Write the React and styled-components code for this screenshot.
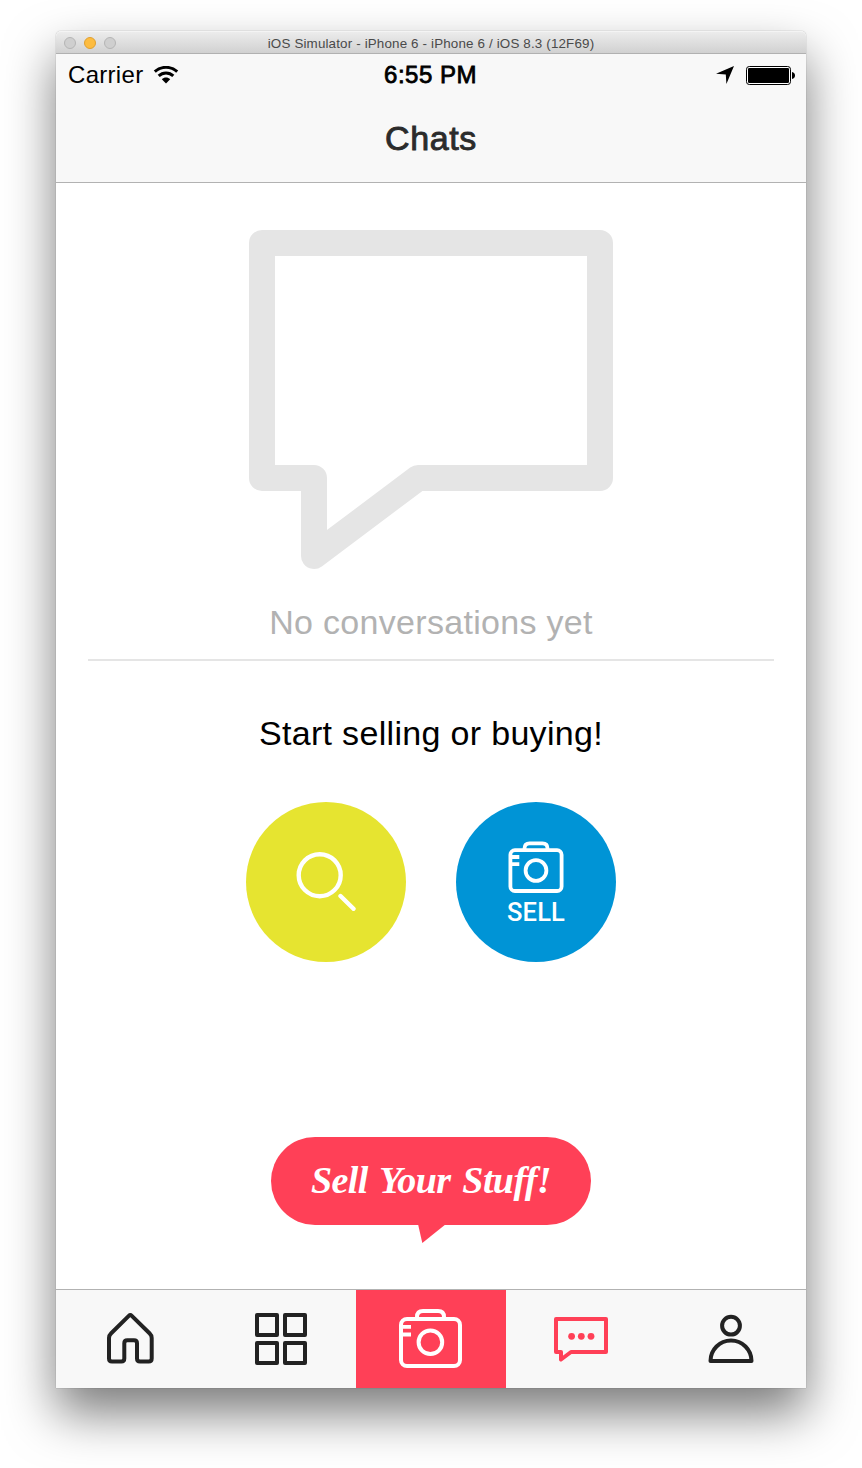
import React from "react";
import styled, { createGlobalStyle } from "styled-components";

const Global = createGlobalStyle`
  * { box-sizing: border-box; }
  body { margin: 0; background: #fff; font-family: "Liberation Sans", Arial, sans-serif; }
  svg { display: block; }
`;

const Desktop = styled.div`
  width: 862px;
  height: 1468px;
  padding: 31px 56px 80px;
  overflow: hidden;
`;

const Window = styled.div`
  width: 750px;
  height: 1357px;
  display: flex;
  flex-direction: column;
  background: #fff;
  border-radius: 5px 5px 0 0;
  box-shadow: 0 0 1px rgba(0, 0, 0, 0.55), 0 25px 50px rgba(0, 0, 0, 0.52);
`;

const TitleBar = styled.header`
  height: 23px;
  display: grid;
  grid-template-columns: 1fr auto 1fr;
  align-items: center;
  padding: 2px 8px 0;
  border-radius: 5px 5px 0 0;
  border-bottom: 1px solid #b1b1b1;
  background: linear-gradient(#ededed, #d1d1d1);
  box-shadow: inset 0 1px 0 #f4f4f4;
`;

const Lights = styled.div`
  display: flex;
  gap: 8px;
`;

const Light = styled.span`
  width: 12px;
  height: 12px;
  border-radius: 50%;
  background: ${(p) => (p.$on ? "#fdbc40" : "#cfcfcf")};
  border: 1px solid ${(p) => (p.$on ? "#e0a030" : "#b5b5b5")};
`;

const WindowTitle = styled.span`
  padding-top: 1px;
  font-size: 13.4px;
  line-height: 18px;
  color: #4a4a4a;
  letter-spacing: 0.15px;
  white-space: nowrap;
`;

const TopArea = styled.div`
  height: 129px;
  background: #f8f8f8;
  border-bottom: 1px solid #b2b2b2;
`;

const StatusBar = styled.div`
  height: 40px;
  display: grid;
  grid-template-columns: 1fr auto 1fr;
  align-items: center;
  padding: 2px 11px 0 12px;
  font-size: 24px;
  color: #000;
`;

const StatusSide = styled.div`
  display: flex;
  align-items: center;
  gap: ${(p) => p.$gap}px;
  justify-content: ${(p) => (p.$end ? "flex-end" : "flex-start")};
`;

const Carrier = styled.span`
  letter-spacing: 0.3px;
`;

const Clock = styled.span`
  letter-spacing: 0.5px;
  margin-right: 2px;
  -webkit-text-stroke: 0.8px #000;
`;

const NavTitle = styled.h1`
  margin: 0;
  height: 88px;
  line-height: 88px;
  text-align: center;
  font-size: 34px;
  font-weight: 400;
  letter-spacing: 0.6px;
  color: #2b2b2b;
  -webkit-text-stroke: 0.9px #2b2b2b;
`;

const Content = styled.main`
  flex: 1;
  display: flex;
  flex-direction: column;
  align-items: center;
  padding: 47px 32px 0;
`;

const EmptyLabel = styled.p`
  margin: 31px 0 0;
  width: 686px;
  height: 60px;
  line-height: 42px;
  text-align: center;
  font-size: 34px;
  letter-spacing: 0.3px;
  color: #b2b2b2;
  border-bottom: 2px solid #e5e5e5;
`;

const Prompt = styled.p`
  margin: 51px 0 0;
  height: 42px;
  line-height: 42px;
  font-size: 34px;
  letter-spacing: 0.32px;
  color: #000;
`;

const Actions = styled.div`
  display: flex;
  gap: 50px;
  margin-top: 48px;
`;

const RoundButton = styled.button`
  width: 160px;
  height: 160px;
  padding: ${(p) => p.$pad || "0"};
  border: 0;
  border-radius: 50%;
  display: flex;
  flex-direction: column;
  align-items: center;
  justify-content: center;
  color: #fff;
  background: ${(p) => p.$color};
`;

const SellLabel = styled.span`
  height: 30px;
  font: 500 25.5px/30px Roboto, sans-serif;
  letter-spacing: 0.2px;
  margin-top: 4px;
`;

const Callout = styled.div`
  display: flex;
  flex-direction: column;
  margin-top: 175px;
`;

const CalloutBody = styled.div`
  width: 320px;
  height: 88px;
  border-radius: 44px;
  background: #ff4057;
  color: #fff;
  text-align: center;
  font: italic 700 38px/86px "Liberation Serif", serif;
  letter-spacing: -0.6px;
  word-spacing: 3px;
  white-space: nowrap;
`;

const CalloutTail = styled.svg`
  margin: -1px 0 0 147px;
`;

const TabBar = styled.nav`
  height: 99px;
  display: grid;
  grid-template-columns: repeat(5, 150px);
  border-top: 1px solid #b2b2b2;
  background: #f8f8f8;
`;

const Tab = styled.div`
  display: flex;
  align-items: center;
  justify-content: center;
  color: ${(p) => p.$color || "#222"};
  background: ${(p) => p.$fill || "transparent"};
`;

const TabIcon = ({ children }) => (
  <svg width="64" height="64" viewBox="0 0 64 64" fill="none" stroke="currentColor"
    strokeWidth="4" strokeLinejoin="round" strokeLinecap="round">
    {children}
  </svg>
);

const WifiIcon = () => (
  <svg width="26" height="18" viewBox="0 0 26 18" fill="none" stroke="#000" strokeWidth="3">
    <path d="M1.8 5.6C8 -.1 18 -.1 24.2 5.6" />
    <path d="M5.7 9.9C9.8 6 16.2 6 20.3 9.9" />
    <path d="M8.8 13.2C11.3 10.8 14.7 10.8 17.2 13.2L13 17.4Z" fill="#000" stroke="none" />
  </svg>
);

const LocationIcon = () => (
  <svg width="18" height="18" viewBox="0 0 18 18">
    <path d="M18 0L10.4 18L9.8 8.4L0 7.7Z" />
  </svg>
);

const BatteryIcon = () => (
  <svg width="49" height="19" viewBox="0 0 49 19">
    <rect x="0.5" y="0.5" width="44" height="18" rx="2.8" fill="#fff" stroke="#000" />
    <rect x="2" y="2" width="41" height="15" rx="1.2" />
    <path d="M46 6q3 .6 3 3.5t-3 3.5z" />
  </svg>
);

const BigBubble = () => (
  <svg width="364" height="340" viewBox="0 0 364 340" fill="none" stroke="#e5e5e5"
    strokeWidth="26" strokeLinejoin="round">
    <path d="M13 13H351V248H169L65 326V248H13Z" />
  </svg>
);

const SearchIcon = () => (
  <svg width="60" height="60" viewBox="0 0 60 60" fill="none" stroke="currentColor" strokeLinecap="round">
    <circle cx="23.7" cy="24.2" r="21" strokeWidth="4.4" />
    <path d="M44.5 45L57.5 57.8" strokeWidth="4.4" />
  </svg>
);

const SellCamera = () => (
  <svg width="56" height="52" viewBox="0 0 56 52" fill="none" stroke="currentColor" strokeWidth="3.8">
    <rect x="2.4" y="9.2" width="51.2" height="40.8" rx="4.5" />
    <path d="M16.5 9V7.5Q16.5 2.4 21.5 2.4H34.5Q39.5 2.4 39.5 7.5V9" />
    <circle cx="28" cy="29.5" r="10.4" />
    <path d="M4 16H11.3M4 23.2H11.3" />
  </svg>
);

export default function App() {
  return (
    <>
      <Global />
      <Desktop>
        <Window>
          <TitleBar>
            <Lights><Light /><Light $on /><Light /></Lights>
            <WindowTitle>iOS Simulator - iPhone 6 - iPhone 6 / iOS 8.3 (12F69)</WindowTitle>
            <span />
          </TitleBar>
          <TopArea>
            <StatusBar>
              <StatusSide $gap={10}><Carrier>Carrier</Carrier><WifiIcon /></StatusSide>
              <Clock>6:55 PM</Clock>
              <StatusSide $end $gap={12}><LocationIcon /><BatteryIcon /></StatusSide>
            </StatusBar>
            <NavTitle>Chats</NavTitle>
          </TopArea>
          <Content>
            <BigBubble />
            <EmptyLabel>No conversations yet</EmptyLabel>
            <Prompt>Start selling or buying!</Prompt>
            <Actions>
              <RoundButton $color="#e6e430" $pad="0 0 3px" aria-label="Search"><SearchIcon /></RoundButton>
              <RoundButton $color="#0094d6" $pad="4px 0 0"><SellCamera /><SellLabel>SELL</SellLabel></RoundButton>
            </Actions>
            <Callout>
              <CalloutBody>Sell Your Stuff!</CalloutBody>
              <CalloutTail width="28" height="19" viewBox="0 0 28 19">
                <path d="M0 0H28L4.3 19Z" fill="#ff4057" />
              </CalloutTail>
            </Callout>
          </Content>
          <TabBar>
            <Tab>
              <TabIcon>
                <path d="M29.8 8.9Q31.3 7.4 32.8 8.9L50.5 26.2Q52.7 28.3 52.7 31V51.5Q52.7 54.5 49.7 54.5H41Q38 54.5 38 51.5V36.3Q38 33.3 35 33.3H28.3Q25.3 33.3 25.3 36.3V51.5Q25.3 54.5 22.3 54.5H13Q10 54.5 10 51.5V31Q10 28.3 12.2 26.2Z" />
              </TabIcon>
            </Tab>
            <Tab>
              <TabIcon>
                <path d="M8 8H28V28H8ZM36 8H56V28H36ZM8 36H28V56H8ZM36 36H56V56H36Z" />
              </TabIcon>
            </Tab>
            <Tab $fill="#ff4057" $color="#fff">
              <TabIcon>
                <rect x="2" y="12" width="59" height="47" rx="6" />
                <path d="M18 11.5V10Q18 4 24 4H39Q45 4 45 10V11.5" strokeLinecap="butt" />
                <circle cx="31.4" cy="35.3" r="11.8" />
                <path d="M3 19.8H12M3 27.5H12" strokeLinecap="butt" strokeWidth="3.8" />
              </TabIcon>
            </Tab>
            <Tab $color="#ff4057">
              <TabIcon>
                <path d="M7 12H57V45H22L12 52.5V45H7Z" />
                <g fill="currentColor" stroke="none">
                  <circle cx="22.6" cy="29.3" r="3.4" />
                  <circle cx="32.3" cy="29.3" r="3.4" />
                  <circle cx="42" cy="29.3" r="3.4" />
                </g>
              </TabIcon>
            </Tab>
            <Tab>
              <TabIcon>
                <circle cx="32" cy="18.7" r="8.9" />
                <path d="M11.5 54A20.5 20.5 0 0 1 52.5 54Z" />
              </TabIcon>
            </Tab>
          </TabBar>
        </Window>
      </Desktop>
    </>
  );
}
